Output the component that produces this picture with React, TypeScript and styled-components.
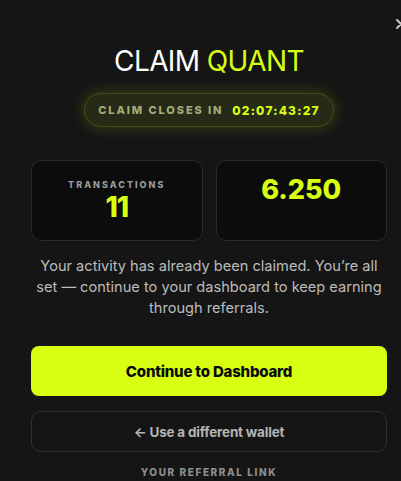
import React from 'react';
import styled, { createGlobalStyle } from 'styled-components';

const lime = '#d8ff12';

const GlobalStyle = createGlobalStyle`
  html, body {
    margin: 0;
    padding: 0;
    background: #151515;
    overflow: hidden;
  }
  body {
    font-family: Inter, 'Noto Sans', sans-serif;
  }
`;

const Modal = styled.div`
  position: relative;
  box-sizing: border-box;
  width: 418px;
  height: 481px;
  padding: 40px 31px 0;
  background: #151515;
  display: flex;
  flex-direction: column;
  align-items: center;
`;

const Close = styled.button`
  position: absolute;
  top: 19px;
  right: 12px;
  border: 0;
  background: none;
  color: #c4c4c4;
  padding: 0;
  line-height: 0;
  cursor: pointer;
`;

const Title = styled.h1`
  margin: 0;
  font-size: 28px;
  font-weight: 400;
  letter-spacing: -0.6px;
  color: #fff;
  line-height: 42px;
  span {
    color: ${lime};
  }
`;

const Countdown = styled.div`
  margin-top: 11px;
  box-sizing: border-box;
  width: 250px;
  height: 34px;
  border-radius: 17px;
  border: 1px solid #3c5410;
  background: #262a17;
  box-shadow: 0 0 14px 2px rgba(190, 240, 20, 0.18);
  display: flex;
  align-items: center;
  justify-content: center;
  gap: 9px;
`;

const CountLabel = styled.span`
  font-size: 11px;
  font-weight: 800;
  letter-spacing: 1.9px;
  color: #a3ad78;
`;

const CountTime = styled.span`
  font-size: 12px;
  font-weight: 800;
  letter-spacing: 1.2px;
  color: ${lime};
`;

const Stats = styled.div`
  margin-top: 33px;
  width: 100%;
  display: grid;
  grid-template-columns: 1fr 1fr;
  gap: 13px;
`;

const StatCard = styled.div<{ top?: boolean }>`
  box-sizing: border-box;
  height: 81px;
  border-radius: 10px;
  border: 1px solid #2b2b2b;
  background: #0c0c0c;
  display: flex;
  flex-direction: column;
  align-items: center;
  justify-content: ${(p) => (p.top ? 'flex-start' : 'center')};
  padding-top: ${(p) => (p.top ? '13px' : '0')};
`;

const StatLabel = styled.div`
  font-size: 9px;
  font-weight: 800;
  letter-spacing: 2px;
  color: #9b9b9b;
  line-height: 12px;
`;

const StatValue = styled.div<{ big?: boolean }>`
  font-size: ${(p) => (p.big ? '27px' : '28px')};
  font-weight: 800;
  color: ${lime};
  line-height: 32px;
  letter-spacing: ${(p) => (p.big ? '0' : '-1px')};
`;

const Message = styled.p`
  margin: 15px 0 0;
  padding: 0 4px;
  text-align: center;
  font-size: 14.6px;
  line-height: 21px;
  color: #bcbcbc;
  font-weight: 400;
`;

const PrimaryButton = styled.button`
  margin-top: 27px;
  width: 100%;
  height: 50px;
  border: 0;
  border-radius: 8px;
  background: ${lime};
  color: #0a0a0a;
  font-family: Inter, sans-serif;
  font-size: 15px;
  font-weight: 800;
  letter-spacing: -0.2px;
  cursor: pointer;
`;

const GhostButton = styled.button`
  margin-top: 15px;
  width: 100%;
  height: 41px;
  border: 1px solid #323232;
  border-radius: 10px;
  background: transparent;
  color: #b4b4b4;
  font-family: Inter, sans-serif;
  font-size: 13.5px;
  font-weight: 700;
  letter-spacing: -0.2px;
  cursor: pointer;
`;

const SectionLabel = styled.div`
  margin-top: 14px;
  font-size: 10px;
  font-weight: 800;
  letter-spacing: 1.6px;
  color: #8e8e8e;
`;

export default function App() {
  return (
    <>
      <GlobalStyle />
      <Modal>
        <Close aria-label="Close">
          <svg width="10" height="10" viewBox="0 0 10 10">
            <path d="M1 1L9 9M9 1L1 9" stroke="currentColor" strokeWidth="2" strokeLinecap="round" />
          </svg>
        </Close>
        <Title>
          CLAIM <span>QUANT</span>
        </Title>
        <Countdown>
          <CountLabel>CLAIM CLOSES IN</CountLabel>
          <CountTime>02:07:43:27</CountTime>
        </Countdown>
        <Stats>
          <StatCard>
            <StatLabel>TRANSACTIONS</StatLabel>
            <StatValue>11</StatValue>
          </StatCard>
          <StatCard top>
            <StatValue big>6.250</StatValue>
          </StatCard>
        </Stats>
        <Message>
          Your activity has already been claimed. You’re all set — continue to your dashboard to
          keep earning through referrals.
        </Message>
        <PrimaryButton>Continue to Dashboard</PrimaryButton>
        <GhostButton>← Use a different wallet</GhostButton>
        <SectionLabel>YOUR REFERRAL LINK</SectionLabel>
      </Modal>
    </>
  );
}
